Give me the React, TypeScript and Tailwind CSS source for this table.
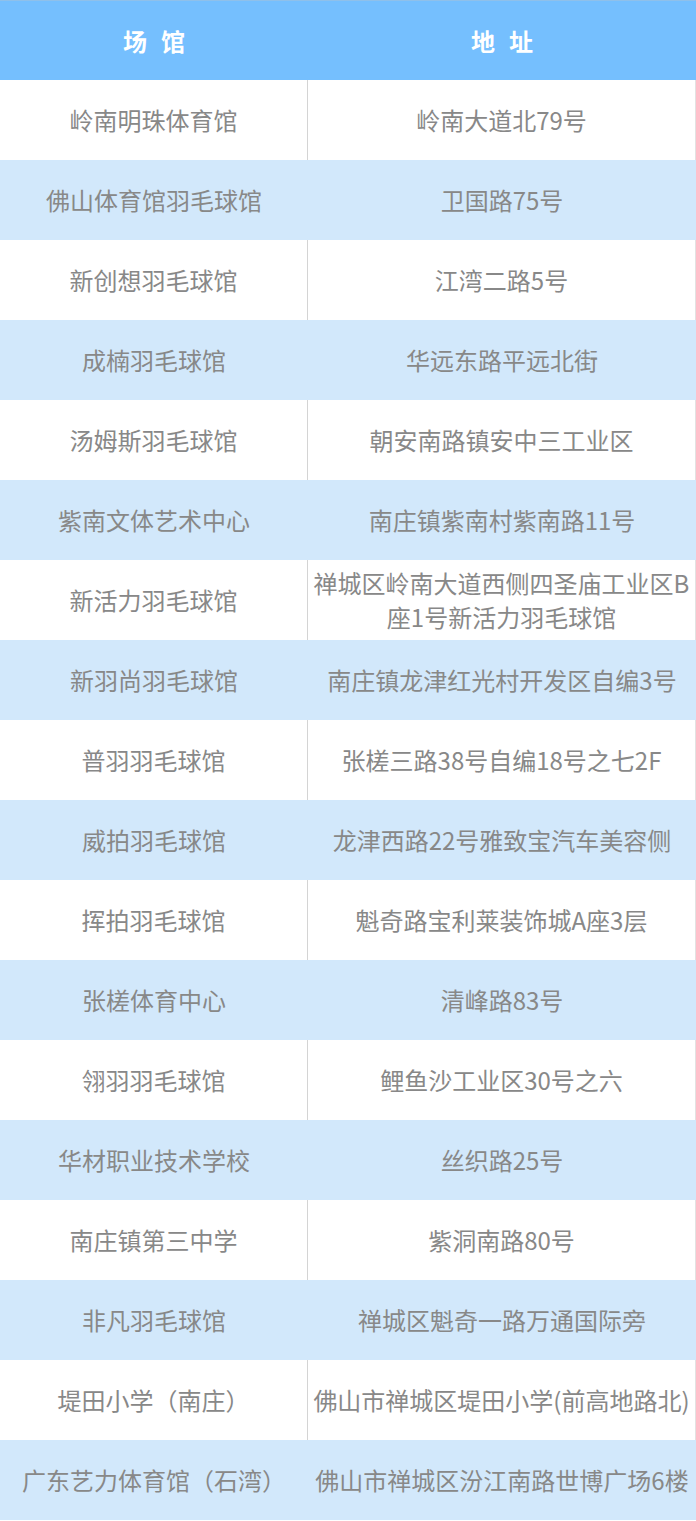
const rows: [string, string][] = [
  ['岭南明珠体育馆', '岭南大道北79号'],
  ['佛山体育馆羽毛球馆', '卫国路75号'],
  ['新创想羽毛球馆', '江湾二路5号'],
  ['成楠羽毛球馆', '华远东路平远北街'],
  ['汤姆斯羽毛球馆', '朝安南路镇安中三工业区'],
  ['紫南文体艺术中心', '南庄镇紫南村紫南路11号'],
  ['新活力羽毛球馆', '禅城区岭南大道西侧四圣庙工业区B座1号新活力羽毛球馆'],
  ['新羽尚羽毛球馆', '南庄镇龙津红光村开发区自编3号'],
  ['普羽羽毛球馆', '张槎三路38号自编18号之七2F'],
  ['威拍羽毛球馆', '龙津西路22号雅致宝汽车美容侧'],
  ['挥拍羽毛球馆', '魁奇路宝利莱装饰城A座3层'],
  ['张槎体育中心', '清峰路83号'],
  ['翎羽羽毛球馆', '鲤鱼沙工业区30号之六'],
  ['华材职业技术学校', '丝织路25号'],
  ['南庄镇第三中学', '紫洞南路80号'],
  ['非凡羽毛球馆', '禅城区魁奇一路万通国际旁'],
  ['堤田小学（南庄）', '佛山市禅城区堤田小学(前高地路北)'],
  ['广东艺力体育馆（石湾）', '佛山市禅城区汾江南路世博广场6楼'],
];

export default function App() {
  return (
    <div
      className="w-[696px] bg-white"
      style={{ fontFamily: '"Microsoft YaHei", "Noto Sans CJK SC", "Noto Sans", sans-serif' }}
    >
      {/* header */}
      <div className="grid h-20 grid-cols-[308px_1fr] border-t border-[#8fc0ea] bg-[#75bffe] text-[24px] font-bold text-white">
        <div className="flex items-center justify-center gap-[14px]">
          <span>场</span>
          <span>馆</span>
        </div>
        <div className="flex items-center justify-center gap-[14px]">
          <span>地</span>
          <span>址</span>
        </div>
      </div>

      {rows.map(([name, addr], i) => {
        const blue = i % 2 === 1;
        return (
          <div
            key={name}
            className={
              blue
                ? 'grid h-20 grid-cols-[308px_1fr] bg-[#d2e8fb] text-[24px] leading-[1.4] text-[#888888]'
                : 'grid h-20 grid-cols-[308px_1fr] border-r border-[#e2e2e2] bg-white text-[24px] leading-[1.4] text-[#888888]'
            }
          >
            <div
              className={
                blue
                  ? 'flex items-center justify-center px-[4px] text-center'
                  : 'flex items-center justify-center border-r border-[#d4d4d4] px-[4px] text-center'
              }
            >
              {name}
            </div>
            <div className="flex items-center justify-center px-[3px] text-center">{addr}</div>
          </div>
        );
      })}
    </div>
  );
}
